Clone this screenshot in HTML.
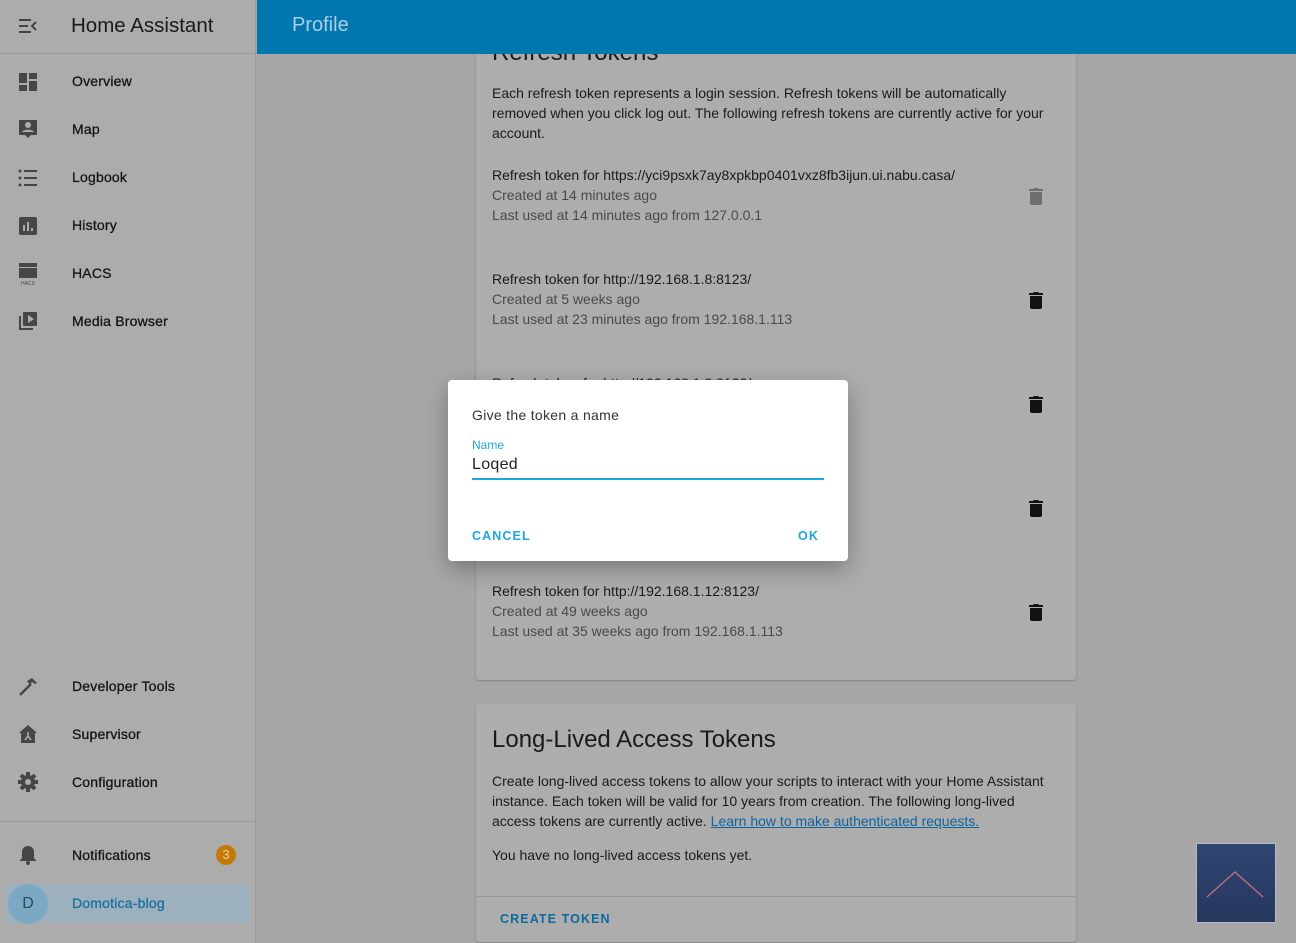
<!DOCTYPE html>
<html><head><meta charset="utf-8"><style>
*{margin:0;padding:0;box-sizing:border-box}
body{width:1296px;height:943px;overflow:hidden;background:#a7a7a7;font-family:"Liberation Sans",sans-serif;position:relative;color:#161616}
.a{position:absolute}
#side{left:0;top:0;width:256px;height:943px;background:#acacac;border-right:1px solid #9c9c9c}
.item{position:absolute;left:72px;font-size:14px;color:#151515;font-weight:normal;letter-spacing:0.2px;-webkit-text-stroke:0.3px #151515}
.ic{position:absolute;left:18px;width:20px;height:20px}
.card{position:absolute;left:476px;width:600px;background:#adadad;border-radius:3px;box-shadow:0 1px 2px rgba(0,0,0,.25)}
.t{position:absolute;left:492px;font-size:14px;line-height:20px;color:#1a1a1a}
.g{color:#4a4a4a}
.trash{position:absolute;left:1029px;width:14px;height:18px}
</style></head><body>
<div id="side" class="a">
 <div class="a" style="left:0;top:0;width:256px;height:54px;border-bottom:1px solid #9a9a9a"></div>
 <svg class="a" style="left:18px;top:17px" width="20" height="18" viewBox="0 0 20 18"><path d="M1 3h12M1 9h9M1 15h12M18 5l-4 4 4 4" stroke="#444" stroke-width="2" fill="none"/></svg>
 <div class="a" style="left:71px;top:14px;font-size:20.5px;color:#1a1a1a">Home Assistant</div>
 <svg class="ic" style="top:72px" viewBox="0 0 20 20"><path d="M1 1h8v10H1zM11 1h8v6h-8zM1 13h8v6H1zM11 9h8v10h-8z" fill="#464646"/></svg>
 <div class="item" style="top:73px">Overview</div>
 <svg class="ic" style="top:119px" viewBox="0 0 20 20"><path d="M2 1h16a1 1 0 0 1 1 1v13a1 1 0 0 1-1 1h-5l-3 3-3-3H2a1 1 0 0 1-1-1V2a1 1 0 0 1 1-1z" fill="#464646"/><circle cx="10" cy="6" r="3" fill="#acacac"/><path d="M4 13c1-3 11-3 12 0z" fill="#acacac"/></svg>
 <div class="item" style="top:121px">Map</div>
 <svg class="ic" style="top:168px" viewBox="0 0 20 20"><path d="M6 3h13M6 10h13M6 17h13" stroke="#464646" stroke-width="2"/><circle cx="2" cy="3" r="1.5" fill="#464646"/><circle cx="2" cy="10" r="1.5" fill="#464646"/><circle cx="2" cy="17" r="1.5" fill="#464646"/></svg>
 <div class="item" style="top:169px">Logbook</div>
 <svg class="ic" style="top:216px" viewBox="0 0 20 20"><rect x="1" y="1" width="18" height="18" rx="2" fill="#464646"/><path d="M6 9v6M10 6v9M14 12v3" stroke="#acacac" stroke-width="2"/></svg>
 <div class="item" style="top:217px">History</div>
 <svg class="ic" style="top:262px;height:24px" viewBox="0 0 20 24"><path d="M1 1h18v4H1zM1 6h18v10H1z" fill="#464646"/><text x="10" y="23" font-size="5" text-anchor="middle" fill="#464646" font-family="Liberation Sans">HACS</text></svg>
 <div class="item" style="top:265px">HACS</div>
 <svg class="ic" style="top:311px" viewBox="0 0 20 20"><path d="M1 5v14h14v-2H3V5z" fill="#464646"/><rect x="5" y="1" width="14" height="14" rx="1" fill="#464646"/><path d="M10 4v8l6-4z" fill="#acacac"/></svg>
 <div class="item" style="top:313px">Media Browser</div>
 <svg class="ic" style="top:676px" viewBox="0 0 20 20"><path d="M2 19L13 8" stroke="#464646" stroke-width="2.5"/><path d="M9 5l5-3 5 5-2 1-3-2-2 3z" fill="#464646"/></svg>
 <div class="item" style="top:678px">Developer Tools</div>
 <svg class="ic" style="top:724px" viewBox="0 0 20 20"><path d="M10 1L1 9h2v10h14V9h2z" fill="#464646"/><path d="M7 16l3-4 3 4M10 12V8" stroke="#acacac" stroke-width="1.5" fill="none"/></svg>
 <div class="item" style="top:726px">Supervisor</div>
 <svg class="ic" style="top:772px" viewBox="0 0 20 20"><circle cx="10" cy="10" r="7" fill="#464646"/><path d="M10 0v20M0 10h20M3 3l14 14M17 3L3 17" stroke="#464646" stroke-width="4"/><circle cx="10" cy="10" r="3" fill="#acacac"/></svg>
 <div class="item" style="top:774px">Configuration</div>
 <div class="a" style="left:0;top:821px;width:256px;border-top:1px solid #9a9a9a"></div>
 <svg class="ic" style="top:845px" viewBox="0 0 20 20"><path d="M10 1c-4 0-6 3-6 6v6l-2 2v1h16v-1l-2-2V7c0-3-2-6-6-6z" fill="#464646"/><circle cx="10" cy="18" r="2" fill="#464646"/></svg>
 <div class="item" style="top:847px">Notifications</div>
 <div class="a" style="left:216px;top:845px;width:20px;height:20px;border-radius:10px;background:#c47a06;color:#e8d0a8;font-size:13px;text-align:center;line-height:20px">3</div>
 <div class="a" style="left:6px;top:884px;width:244px;height:39px;background:#9cb1bd;border-radius:2px"></div>
 <div class="a" style="left:8px;top:884px;width:40px;height:40px;border-radius:20px;background:#7ba9c4;color:#284a5c;font-size:16px;text-align:center;line-height:40px">D</div>
 <div class="item" style="top:895px;color:#1a6f9c;-webkit-text-stroke:0.3px #1a6f9c">Domotica-blog</div>
</div>

<div class="card" style="top:20px;height:660px"></div>
<div class="card" style="top:704px;height:238px"></div>
<div class="a" style="left:476px;top:896px;width:600px;border-top:1px solid #999"></div>

<div class="t" style="top:38px;font-size:24px;line-height:30px">Refresh Tokens</div>
<div class="t" style="top:83px;width:570px">Each refresh token represents a login session. Refresh tokens will be automatically removed when you click log out. The following refresh tokens are currently active for your account.</div>
<div class="t" style="top:165px">Refresh token for https://yci9psxk7ay8xpkbp0401vxz8fb3ijun.ui.nabu.casa/<br><span class="g">Created at 14 minutes ago<br>Last used at 14 minutes ago from 127.0.0.1</span></div>
<div class="t" style="top:269px">Refresh token for http://192.168.1.8:8123/<br><span class="g">Created at 5 weeks ago<br>Last used at 23 minutes ago from 192.168.1.113</span></div>
<div class="t" style="top:373px">Refresh token for http://192.168.1.8:8123/</div>
<div class="t" style="top:581px">Refresh token for http://192.168.1.12:8123/<br><span class="g">Created at 49 weeks ago<br>Last used at 35 weeks ago from 192.168.1.113</span></div>
<svg class="trash" style="top:187px" viewBox="0 0 14 18"><path d="M0 2h4l1-1h4l1 1h4v2H0zM1 5h12v11a2 2 0 0 1-2 2H3a2 2 0 0 1-2-2z" fill="#6e6e6e"/></svg>
<svg class="trash" style="top:291px" viewBox="0 0 14 18"><path d="M0 2h4l1-1h4l1 1h4v2H0zM1 5h12v11a2 2 0 0 1-2 2H3a2 2 0 0 1-2-2z" fill="#111"/></svg>
<svg class="trash" style="top:395px" viewBox="0 0 14 18"><path d="M0 2h4l1-1h4l1 1h4v2H0zM1 5h12v11a2 2 0 0 1-2 2H3a2 2 0 0 1-2-2z" fill="#111"/></svg>
<svg class="trash" style="top:499px" viewBox="0 0 14 18"><path d="M0 2h4l1-1h4l1 1h4v2H0zM1 5h12v11a2 2 0 0 1-2 2H3a2 2 0 0 1-2-2z" fill="#111"/></svg>
<svg class="trash" style="top:603px" viewBox="0 0 14 18"><path d="M0 2h4l1-1h4l1 1h4v2H0zM1 5h12v11a2 2 0 0 1-2 2H3a2 2 0 0 1-2-2z" fill="#111"/></svg>

<div class="t" style="top:725px;font-size:24px;line-height:30px">Long-Lived Access Tokens</div>
<div class="t" style="top:771px;width:570px">Create long-lived access tokens to allow your scripts to interact with your Home Assistant instance. Each token will be valid for 10 years from creation. The following long-lived access tokens are currently active. <span style="color:#0f64a0;text-decoration:underline">Learn how to make authenticated requests.</span></div>
<div class="t" style="top:845px">You have no long-lived access tokens yet.</div>
<div class="a" style="left:500px;top:912px;font-size:12.5px;font-weight:bold;letter-spacing:1.1px;color:#0e6a9c">CREATE TOKEN</div>

<div class="a" style="left:257px;top:0;width:1039px;height:54px;background:#0277af"></div>
<div class="a" style="left:292px;top:14px;font-size:20px;color:#a9cfe4">Profile</div>

<div class="a" style="left:1196px;top:843px;width:80px;height:80px;background:linear-gradient(#2e4672,#27375e);border:1px solid #b9b9c5"></div>
<svg class="a" style="left:1196px;top:843px" width="80" height="80"><path d="M11 54L39 29 67 54" stroke="#c26f7f" stroke-width="1.3" fill="none"/></svg>

<div class="a" style="left:448px;top:380px;width:400px;height:181px;background:#fff;border-radius:4px;box-shadow:0 8px 24px rgba(0,0,0,.3)"></div>
<div class="a" style="left:472px;top:407px;font-size:14px;color:#333;letter-spacing:0.3px">Give the token a name</div>
<div class="a" style="left:472px;top:438px;font-size:12px;color:#1ea6df">Name</div>
<div class="a" style="left:472px;top:456px;font-size:16px;color:#222;letter-spacing:0.3px">Loqed</div>
<div class="a" style="left:472px;top:478px;width:352px;height:2px;background:#1ea6df"></div>
<div class="a" style="left:472px;top:529px;font-size:12.5px;font-weight:bold;letter-spacing:1.1px;color:#1ea6df">CANCEL</div>
<div class="a" style="left:798px;top:529px;font-size:12.5px;font-weight:bold;letter-spacing:1.1px;color:#1ea6df">OK</div>
</body></html>
